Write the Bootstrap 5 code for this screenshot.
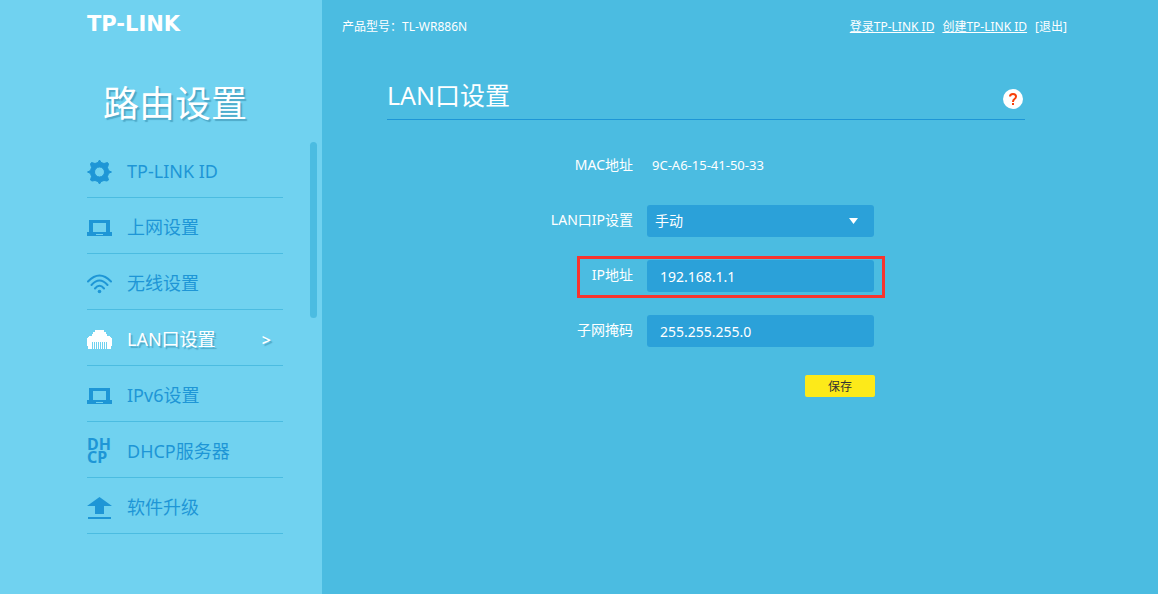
<!DOCTYPE html>
<html lang="zh-CN">
<head>
<meta charset="utf-8">
<meta name="viewport" content="width=device-width, initial-scale=1">
<title>LAN口设置</title>
<link href="https://cdn.jsdelivr.net/npm/bootstrap@5.3.0/dist/css/bootstrap.min.css" rel="stylesheet">
<style>
  body { font-family: "Noto Sans", "Noto Sans CJK SC", sans-serif; font-size: 14px; line-height: 20px; color: #fff; background: #4bbce1; }
  .side { width: 322px; background: #70d2f0; padding-left: 87px; }
  .brand { font: bold 21px/20px "DejaVu Sans", sans-serif; margin-top: 14px; color: #fff; }
  .side-title { font-size: 36px; line-height: 52px; margin: 44px 0 12px 16px; font-weight: 400; text-shadow: 2px 2px 1px #4ea9c8; }
  .menu-list { width: 196px; }
  .menu-list a { height: 56px; padding-top: 2px; border-bottom: 1px solid #4bbce1; color: #1e96d6; font-size: 18px; gap: 15px; }
  .menu-list a.current { color: #fff; }
  .menu-list a.current span { text-shadow: 2px 2px 1px #4ea9c8; }
  .menu-list svg { width: 25px; height: 26px; margin-top: 2px; flex: none; fill: currentColor; }
  .dhcp { width: 25px; font-size: 16px; line-height: 13px; font-weight: 700; }
  .arrow { font-size: 16px; font-weight: 600; padding: 2px 12px 0 0; }
  .scroll-thumb { width: 7px; height: 176px; margin-left: 27px; border-radius: 4px; background: #4bbce1; }
  .topbar { font-size: 12px; padding: 17px 91px 0 20px; }
  .topbar a { color: #fff; }
  .content { max-width: 638px; margin-left: 65px; }
  .page-head { height: 48px; margin-top: 35px; border-bottom: 1px solid #1e96d6; }
  .page-head h1 { font-size: 25px; line-height: 46px; font-weight: 400; padding-bottom: 2px; }
  .help { width: 20px; height: 20px; border-radius: 50%; background: #fff; margin: 6px 2px 0 0; }
  .settings { margin-top: 30px; gap: 23px; }
  .field { height: 32px; gap: 14px; }
  .field-name { width: 246px; padding-bottom: 2px; text-align: right; }
  .mac { font-size: 13px; padding-left: 5px; padding-bottom: 2px; }
  .entry { width: 227px; height: 32px; border: 0; border-radius: 3px; background-color: #2ba1d9; color: #fff; padding: 0 13px; }
  .entry:focus { background-color: #2ba1d9; color: #fff; }
  select.entry { appearance: none; padding: 0 8px; }
  .select-mark { right: 16px; top: 13px; }
  .highlight { left: 190px; top: -4px; width: 308px; height: 42px; border: 3px solid #f8342f; pointer-events: none; }
  .save { width: 70px; height: 22px; margin: 5px 0 0 418px; border: 0; border-radius: 2px; background: #fdea19; color: #333; font-size: 12px; line-height: 24px; }
</style>
</head>
<body>
<div class="d-flex min-vh-100">
  <aside class="side flex-shrink-0">
    <div class="brand">TP-LINK</div>
    <h2 class="side-title">路由设置</h2>
    <div class="d-flex">
      <nav class="menu-list">
        <a href="#" class="d-flex align-items-center text-decoration-none">
          <svg viewBox="0 0 25 26"><path fill-rule="evenodd" stroke="currentColor" stroke-linejoin="round" d="M11 3.500 12.500 1 14 3.500 17 4.500 20.500 3.500 21.500 5 20.500 8.500 21.500 11.500 24.500 13 21.500 14.500 20.500 17.500 21.500 21 20 22 17 21.500 14 22.500 12.500 25 11 22.500 8 21.500 5 22 3.500 21 4.500 17.500 3.500 14.500 .5 13 3.500 11.500 4.500 8.500 3.500 5 4.500 3.500 8 4.500ZM12.500 8a5 5 0 1 0 0 10 5 5 0 0 0 0-10Z"/></svg>
          <span>TP-LINK ID</span></a>
        <a href="#" class="d-flex align-items-center text-decoration-none">
          <svg viewBox="0 0 25 26"><path fill-rule="evenodd" d="M2 5h21v12h2v4H0v-4h2ZM6 8v9h13V8ZM9 19v1h7v-1Z"/></svg>
          <span>上网设置</span></a>
        <a href="#" class="d-flex align-items-center text-decoration-none">
          <svg viewBox="0 0 25 26"><g fill="none" stroke="currentColor" stroke-width="2" stroke-linecap="round"><path d="M1 10.500Q12.500-1.500 24 10.500M4.500 14Q12.500 5 20.500 14M8 17.500Q12.500 12 17 17.500"/></g><circle cx="12.500" cy="20.500" r="1.800"/></svg>
          <span>无线设置</span></a>
        <a href="#" class="current d-flex align-items-center text-decoration-none" aria-current="page">
          <svg viewBox="0 0 25 26" shape-rendering="crispEdges"><path d="M8 3h9v2h2v2h1v2h3l1 2h1v8h-1v3H1v-3H0v-8h1l1-2h3V7h1V5h2Z"/><path fill="none" stroke="#70d2f0" d="M5.500 15v7M7.500 15v7M9.500 15v7M11.500 15v7M13.500 15v7M15.500 15v7M17.500 15v7M19.500 15v7"/></svg>
          <span>LAN口设置</span><span class="arrow ms-auto">&gt;</span></a>
        <a href="#" class="d-flex align-items-center text-decoration-none">
          <svg viewBox="0 0 25 26"><path fill-rule="evenodd" d="M2 5h21v12h2v4H0v-4h2ZM6 8v9h13V8ZM9 19v1h7v-1Z"/></svg>
          <span>IPv6设置</span></a>
        <a href="#" class="d-flex align-items-center text-decoration-none">
          <span class="dhcp">DH<br>CP</span>
          <span>DHCP服务器</span></a>
        <a href="#" class="d-flex align-items-center text-decoration-none">
          <svg viewBox="0 0 25 26"><path d="M12.500 2 25 11h-8v8H8v-8H0ZM1 22h23v2H1Z"/></svg>
          <span>软件升级</span></a>
      </nav>
      <div class="scroll-thumb"></div>
    </div>
  </aside>
  <main class="flex-grow-1">
    <header class="topbar d-flex">
      <span>产品型号：TL-WR886N</span>
      <div class="ms-auto d-flex gap-2">
        <a href="#">登录TP-LINK ID</a><a href="#">创建TP-LINK ID</a><a href="#" class="text-decoration-none">[退出]</a>
      </div>
    </header>
    <div class="content">
      <div class="page-head d-flex justify-content-between align-items-center">
        <h1 class="m-0">LAN口设置</h1>
        <button type="button" class="help border-0 p-0 d-flex align-items-center justify-content-center" aria-label="帮助">
          <svg width="10" height="14" viewBox="0 0 10 14"><path d="M2 4.500Q2 2 5 2T8 4.500Q8 6 6.500 7T5 10" fill="none" stroke="#f8400a" stroke-width="2"/><path fill="#f8400a" d="M4 11h2v2H4z"/></svg>
        </button>
      </div>
      <form class="settings d-flex flex-column">
        <div class="field d-flex align-items-center"><span class="field-name">MAC地址</span><span class="mac">9C-A6-15-41-50-33</span></div>
        <div class="field d-flex align-items-center">
          <label class="field-name" for="mode">LAN口IP设置</label>
          <div class="position-relative">
            <select class="entry d-block" id="mode"><option>手动</option><option>自动</option></select>
            <svg class="select-mark position-absolute" width="9" height="6" viewBox="0 0 9 6"><path fill="#fff" d="M0 0h9L4.500 6Z"/></svg>
          </div>
        </div>
        <div class="field d-flex align-items-center position-relative">
          <label class="field-name" for="ip">IP地址</label>
          <input class="entry" id="ip" type="text" value="192.168.1.1">
          <div class="highlight position-absolute"></div>
        </div>
        <div class="field d-flex align-items-center">
          <label class="field-name" for="mask">子网掩码</label>
          <input class="entry" id="mask" type="text" value="255.255.255.0">
        </div>
        <button type="button" class="save p-0">保存</button>
      </form>
    </div>
  </main>
</div>
<script src="https://cdn.jsdelivr.net/npm/bootstrap@5.3.0/dist/js/bootstrap.bundle.min.js"></script>
</body>
</html>
